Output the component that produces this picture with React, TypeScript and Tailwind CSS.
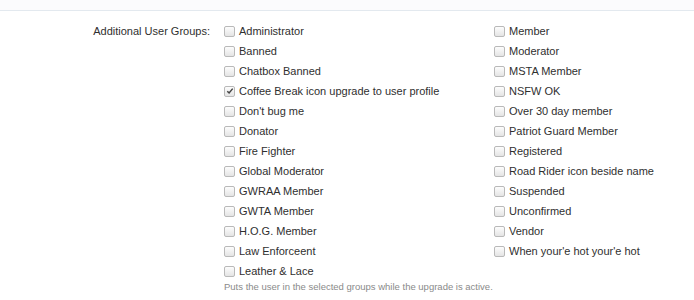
const LEFT_GROUPS = [
  "Administrator",
  "Banned",
  "Chatbox Banned",
  "Coffee Break icon upgrade to user profile",
  "Don't bug me",
  "Donator",
  "Fire Fighter",
  "Global Moderator",
  "GWRAA Member",
  "GWTA Member",
  "H.O.G. Member",
  "Law Enforceent",
  "Leather & Lace",
];

const RIGHT_GROUPS = [
  "Member",
  "Moderator",
  "MSTA Member",
  "NSFW OK",
  "Over 30 day member",
  "Patriot Guard Member",
  "Registered",
  "Road Rider icon beside name",
  "Suspended",
  "Unconfirmed",
  "Vendor",
  "When your'e hot your'e hot",
];

const CHECKED = new Set(["Coffee Break icon upgrade to user profile"]);

function Box({ checked }: { checked: boolean }) {
  return (
    <span className="flex h-[11px] w-[11px] shrink-0 items-center justify-center rounded-[2px] border border-[#b9b9b9] bg-gradient-to-b from-[#fdfdfd] to-[#e4e4e4]">
      {checked && (
        <svg width="8" height="8" viewBox="0 0 8 8">
          <path d="M1.3 4.2 L3.1 6 L6.7 1.6" fill="none" stroke="#444" strokeWidth="1.5" />
        </svg>
      )}
    </span>
  );
}

function GroupList({ items }: { items: string[] }) {
  return (
    <ul className="flex flex-col">
      {items.map((g) => (
        <li key={g} className="flex h-5 items-center gap-[4px]">
          <Box checked={CHECKED.has(g)} />
          <span className="whitespace-nowrap">{g}</span>
        </li>
      ))}
    </ul>
  );
}

export default function App() {
  return (
    <div className="h-[300px] w-[694px] overflow-hidden bg-white font-['Liberation_Sans',sans-serif] text-[11px] text-[#2f2f2f]">
      <div className="h-[11px] border-b border-[#e3e9ef] bg-[#fbfbfd]" />
      <div className="flex pt-[10px]">
        <div className="w-[212px] pr-[2px] pt-[3px] text-right leading-[14px]">
          Additional User Groups:
        </div>
        <div className="pl-[12px]">
          <div className="grid w-[470px] grid-cols-[270px_200px]">
            <GroupList items={LEFT_GROUPS} />
            <GroupList items={RIGHT_GROUPS} />
          </div>
          <p className="-mt-[1px] text-[9.5px] leading-[14px] text-[#8a8a8a]">
            Puts the user in the selected groups while the upgrade is active.
          </p>
        </div>
      </div>
    </div>
  );
}
